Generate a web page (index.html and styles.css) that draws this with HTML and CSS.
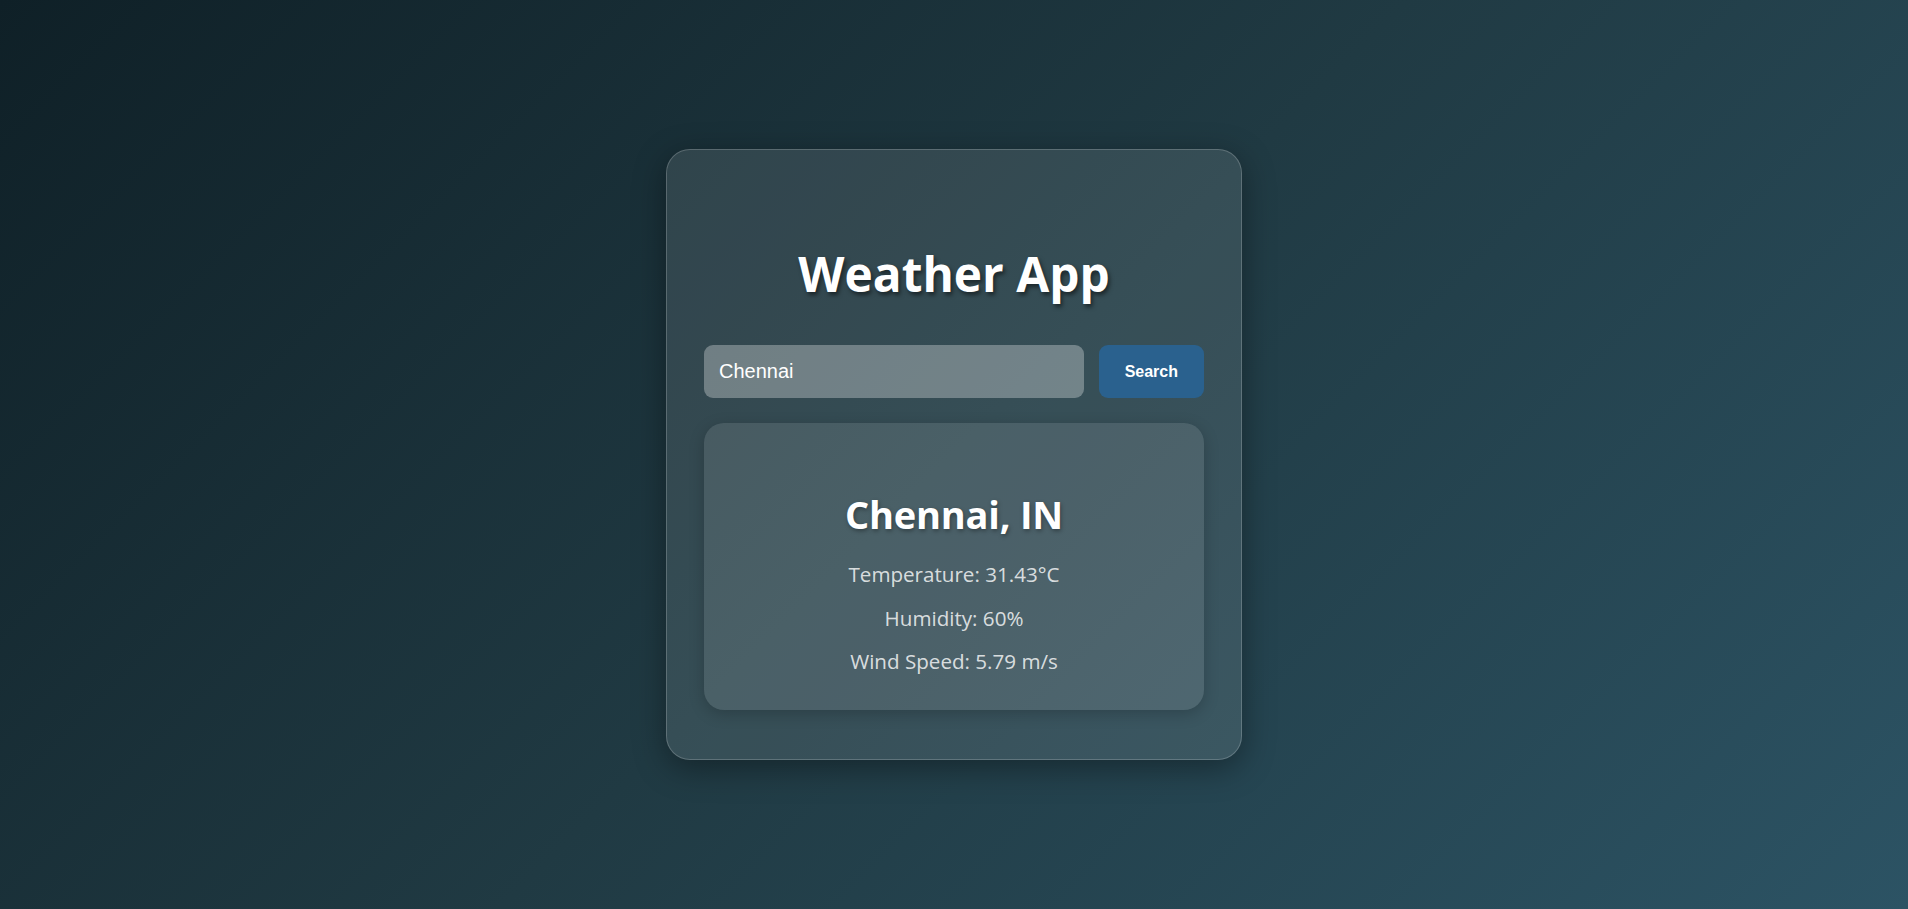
FILE: index.html
```html
<!DOCTYPE html>
<html lang="en">
<head>
<meta charset="UTF-8">
<title>Weather App</title>
<link rel="stylesheet" href="styles.css">
</head>
<body>
  <div class="card">
    <h1 class="title">Weather App</h1>
    <div class="search-row">
      <input class="city-input" type="text" value="Chennai">
      <button class="search-btn">Search</button>
    </div>
    <div class="result">
      <h2 class="city">Chennai, IN</h2>
      <p class="stat">Temperature: 31.43°C</p>
      <p class="stat">Humidity: 60%</p>
      <p class="stat">Wind Speed: 5.79 m/s</p>
    </div>
  </div>
</body>
</html>
```

FILE: styles.css
```css
* { box-sizing: border-box; }

html, body { height: 100%; }

body {
  margin: 0;
  display: flex;
  align-items: center;
  justify-content: center;
  background: linear-gradient(135deg, #0f2027 0%, #203a43 50%, #2c5364 100%);
  font-family: "Segoe UI", "Open Sans", "Noto Sans", sans-serif;
  color: #fff;
}

.card {
  width: 576px;
  padding: 49px 37px 49px;
  background: rgba(255, 255, 255, 0.1);
  border: 1px solid rgba(255, 255, 255, 0.2);
  border-radius: 24px;
  box-shadow: 0 8px 32px rgba(0, 0, 0, 0.37);
  text-align: center;
}

.title {
  margin: 45px 0 41px;
  font-size: 47.8px;
  line-height: 60px;
  font-weight: 700;
  color: #fff;
  text-shadow: 2px 3px 4px rgba(0, 0, 0, 0.5);
}

.search-row {
  display: flex;
  gap: 15px;
  height: 53px;
}

.city-input {
  flex: 1;
  min-width: 0;
  height: 53px;
  padding: 0 15px;
  border: none;
  outline: none;
  border-radius: 9px;
  background: rgba(255, 255, 255, 0.3);
  color: #fff;
  font-family: "Liberation Sans", Arial, sans-serif;
  font-size: 20px;
}

.search-btn {
  height: 53px;
  padding: 0 26px;
  border: none;
  border-radius: 9px;
  background: #2a618e;
  color: #fff;
  font-family: "Liberation Sans", Arial, sans-serif;
  font-size: 16px;
  font-weight: 700;
}

.result {
  margin-top: 25px;
  padding: 68px 20px 37px;
  background: rgba(255, 255, 255, 0.1);
  border-radius: 20px;
  box-shadow: 0 4px 16px rgba(0, 0, 0, 0.2);
}

.city {
  margin: 0 0 24px;
  font-size: 38px;
  line-height: 47px;
  font-weight: 700;
  letter-spacing: -0.2px;
  color: #fff;
  text-shadow: 1px 2px 4px rgba(0, 0, 0, 0.35);
}

.stat {
  margin: 19.5px 0 0;
  font-size: 20.6px;
  line-height: 24px;
  color: rgba(255, 255, 255, 0.8);
}

.city + .stat { margin-top: 0; }
```
